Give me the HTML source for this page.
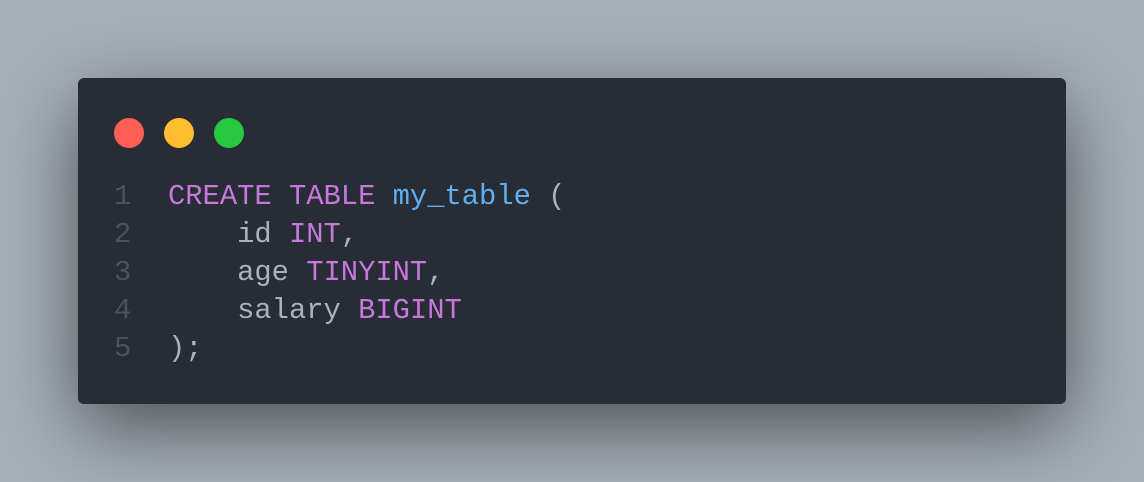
<!DOCTYPE html>
<html><head><style>
body{margin:0;width:1144px;height:482px;background:#a7b0b9;overflow:hidden;position:relative}
.win{position:absolute;left:78px;top:78px;width:988px;height:326px;background:#282c34;border-radius:6px;box-shadow:0 24px 80px rgba(0,0,0,0.55)}
.d{position:absolute;top:40px;width:30px;height:30px;border-radius:50%}
pre{position:absolute;left:0;top:100px;margin:0;font-family:"Liberation Mono",monospace;font-size:28.8px;line-height:38px;color:#abb2bf}
.n{display:inline-block;width:90px;color:#495162;text-align:left;padding-left:36px;box-sizing:border-box}
.k{color:#c678dd}.b{color:#61afef}
</style></head><body>
<div class="win">
<div class="d" style="left:36px;background:#ff5f56"></div>
<div class="d" style="left:86px;background:#ffbd2e"></div>
<div class="d" style="left:136px;background:#27c93f"></div>
<pre><span class="n">1</span><span class="k">CREATE TABLE</span> <span class="b">my_table</span> (
<span class="n">2</span>    id <span class="k">INT</span>,
<span class="n">3</span>    age <span class="k">TINYINT</span>,
<span class="n">4</span>    salary <span class="k">BIGINT</span>
<span class="n">5</span>);</pre>
</div>
</body></html>
